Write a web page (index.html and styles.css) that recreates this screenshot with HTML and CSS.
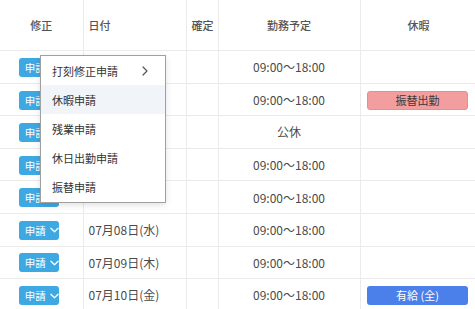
FILE: index.html
```html
<!DOCTYPE html>
<html lang="ja">
<head>
<meta charset="utf-8">
<link rel="stylesheet" href="styles.css">
</head>
<body>
<div class="wrap">
  <table class="grid">
    <colgroup>
      <col class="c-fix"><col class="c-date"><col class="c-conf"><col class="c-plan"><col class="c-leave">
    </colgroup>
    <thead>
      <tr>
        <th class="center">修正</th>
        <th class="left">日付</th>
        <th class="left">確定</th>
        <th class="center">勤務予定</th>
        <th class="center">休暇</th>
      </tr>
    </thead>
    <tbody>
      <tr>
        <td class="center"><span class="btn">申請<svg class="chev" viewBox="0 0 10 6" width="9" height="6"><path d="M1 1l4 4 4-4" fill="none" stroke="#fff" stroke-width="1.4" stroke-linecap="round" stroke-linejoin="round"/></svg></span></td>
        <td class="date"></td><td></td><td class="center">09:00〜18:00</td><td></td>
      </tr>
      <tr>
        <td class="center"><span class="btn">申請<svg class="chev" viewBox="0 0 10 6" width="9" height="6"><path d="M1 1l4 4 4-4" fill="none" stroke="#fff" stroke-width="1.4" stroke-linecap="round" stroke-linejoin="round"/></svg></span></td>
        <td class="date"></td><td></td><td class="center">09:00〜18:00</td><td class="center"><span class="tag tag-pink">振替出勤</span></td>
      </tr>
      <tr>
        <td class="center"><span class="btn">申請<svg class="chev" viewBox="0 0 10 6" width="9" height="6"><path d="M1 1l4 4 4-4" fill="none" stroke="#fff" stroke-width="1.4" stroke-linecap="round" stroke-linejoin="round"/></svg></span></td>
        <td class="date"></td><td></td><td class="center">公休</td><td></td>
      </tr>
      <tr>
        <td class="center"><span class="btn">申請<svg class="chev" viewBox="0 0 10 6" width="9" height="6"><path d="M1 1l4 4 4-4" fill="none" stroke="#fff" stroke-width="1.4" stroke-linecap="round" stroke-linejoin="round"/></svg></span></td>
        <td class="date"></td><td></td><td class="center">09:00〜18:00</td><td></td>
      </tr>
      <tr>
        <td class="center"><span class="btn">申請<svg class="chev" viewBox="0 0 10 6" width="9" height="6"><path d="M1 1l4 4 4-4" fill="none" stroke="#fff" stroke-width="1.4" stroke-linecap="round" stroke-linejoin="round"/></svg></span></td>
        <td class="date"></td><td></td><td class="center">09:00〜18:00</td><td></td>
      </tr>
      <tr>
        <td class="center"><span class="btn">申請<svg class="chev" viewBox="0 0 10 6" width="9" height="6"><path d="M1 1l4 4 4-4" fill="none" stroke="#fff" stroke-width="1.4" stroke-linecap="round" stroke-linejoin="round"/></svg></span></td>
        <td class="date">07月08日(水)</td><td></td><td class="center">09:00〜18:00</td><td></td>
      </tr>
      <tr>
        <td class="center"><span class="btn">申請<svg class="chev" viewBox="0 0 10 6" width="9" height="6"><path d="M1 1l4 4 4-4" fill="none" stroke="#fff" stroke-width="1.4" stroke-linecap="round" stroke-linejoin="round"/></svg></span></td>
        <td class="date">07月09日(木)</td><td></td><td class="center">09:00〜18:00</td><td></td>
      </tr>
      <tr>
        <td class="center"><span class="btn">申請<svg class="chev" viewBox="0 0 10 6" width="9" height="6"><path d="M1 1l4 4 4-4" fill="none" stroke="#fff" stroke-width="1.4" stroke-linecap="round" stroke-linejoin="round"/></svg></span></td>
        <td class="date">07月10日(金)</td><td></td><td class="center">09:00〜18:00</td><td class="center"><span class="tag tag-blue">有給 (全)</span></td>
      </tr>
    </tbody>
  </table>

  <ul class="menu">
    <li class="item">打刻修正申請<svg class="arrow" viewBox="0 0 6 10" width="6" height="10"><path d="M1 1l4 4-4 4" fill="none" stroke="#555" stroke-width="1.2" stroke-linecap="round" stroke-linejoin="round"/></svg></li>
    <li class="item active">休暇申請</li>
    <li class="item">残業申請</li>
    <li class="item">休日出勤申請</li>
    <li class="item">振替申請</li>
  </ul>
</div>
</body>
</html>
```

FILE: styles.css
```css
html, body {
  margin: 0;
  padding: 0;
  background: #fff;
}
body {
  font-family: "Noto Sans CJK JP", "Noto Sans", sans-serif;
  color: #444;
  overflow: hidden;
}
.wrap {
  position: relative;
  width: 475px;
  height: 309px;
  overflow: hidden;
}
.grid {
  border-collapse: collapse;
  table-layout: fixed;
  width: 477px;
}
.c-fix { width: 83px; }
.c-date { width: 103px; }
.c-conf { width: 32px; }
.c-plan { width: 142px; }
.c-leave { width: 117px; }

.grid th, .grid td {
  border: 1.5px solid #ebebeb;
  padding: 0 5px;
  font-size: 12px;
  white-space: nowrap;
  overflow: hidden;
}
.grid tr > :first-child { border-left: none; }
.grid thead tr th { border-top: none; }
.grid th {
  height: 50px;
  font-size: 11px;
  font-weight: 500;
  color: #555;
}
.grid td {
  height: 31.6px;
  color: #4a4a4a;
}
.center { text-align: center; }
.left { text-align: left; }
.date { padding-left: 4px; }

.btn {
  display: inline-flex;
  align-items: center;
  gap: 4px;
  height: 19px;
  width: 40px;
  box-sizing: border-box;
  padding-left: 6px;
  background: #3ea8e2;
  color: #fff;
  font-size: 10.5px;
  border-radius: 3px;
  vertical-align: middle;
  margin-right: 5px;
}
.chev { display: block; }

.tag {
  display: inline-block;
  width: 101px;
  height: 19px;
  line-height: 19px;
  box-sizing: border-box;
  border-radius: 3px;
  font-size: 11px;
  vertical-align: middle;
  margin-left: -2px;
}
.tag-pink {
  background: #f29e9e;
  border: 1px solid #e98c8c;
  color: #3a3a3a;
  line-height: 17px;
}
.tag-blue {
  background: #4b80ea;
  color: #fff;
}

.menu {
  position: absolute;
  left: 40px;
  top: 55px;
  width: 126px;
  margin: 0;
  padding: 0;
  list-style: none;
  background: #fff;
  border: 1px solid #a0a0a0;
  box-sizing: border-box;
  box-shadow: 0 2px 6px rgba(0,0,0,0.12);
}
.item {
  height: 29.2px;
  display: flex;
  align-items: center;
  justify-content: space-between;
  padding: 0 17px 0 11px;
  font-size: 11px;
  color: #333;
}
.item.active {
  background: #f1f4f9;
}
.arrow { display: block; }
```
